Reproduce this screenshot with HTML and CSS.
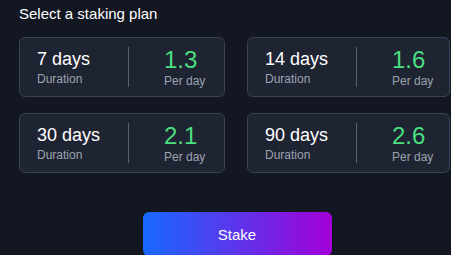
FILE: index.html
```html
<!DOCTYPE html>
<html lang="en">
<head>
    <meta charset="UTF-8">
    <meta name="viewport" content="width=device-width, initial-scale=1.0">
    <title>Staking</title>
    <link rel="stylesheet" href="styles.css">
</head>
<body>

    <div class="title">Select a staking plan</div>

    <div class="plans">
        <div class="plan">
            <div class="plan-left">
                <div class="days">7 days</div>
                <div class="label">Duration</div>
            </div>
            <div class="divider"></div>
            <div class="plan-right">
                <div class="rate">1.3</div>
                <div class="label">Per day</div>
            </div>
        </div>
        <div class="plan">
            <div class="plan-left">
                <div class="days">14 days</div>
                <div class="label">Duration</div>
            </div>
            <div class="divider"></div>
            <div class="plan-right">
                <div class="rate">1.6</div>
                <div class="label">Per day</div>
            </div>
        </div>
        <div class="plan">
            <div class="plan-left">
                <div class="days">30 days</div>
                <div class="label">Duration</div>
            </div>
            <div class="divider"></div>
            <div class="plan-right">
                <div class="rate">2.1</div>
                <div class="label">Per day</div>
            </div>
        </div>
        <div class="plan">
            <div class="plan-left">
                <div class="days">90 days</div>
                <div class="label">Duration</div>
            </div>
            <div class="divider"></div>
            <div class="plan-right">
                <div class="rate">2.6</div>
                <div class="label">Per day</div>
            </div>
        </div>
    </div>

    <button class="stake-btn">Stake</button>

</body>
</html>
```

FILE: styles.css
```css
body {
    margin: 0;
    background-color: #131722;
    font-family: 'Liberation Sans', Arial, sans-serif;
    color: #ffffff;
    overflow: hidden;
}
.title {
    font-size: 15px;
    line-height: 17px;
    padding: 5px 0 0 19px;
}
.plans {
    display: grid;
    grid-template-columns: 206px 203px;
    column-gap: 22px;
    row-gap: 16px;
    margin: 15px 0 0 19px;
}
.plan {
    display: flex;
    align-items: center;
    height: 58px;
    padding: 0 12px 0 17px;
    background-color: #1f2433;
    border: 1px solid #3a4257;
    border-radius: 6px;
}
.plan-left {
    width: 91px;
    flex-shrink: 0;
}
.days {
    font-size: 18px;
}
.label {
    font-size: 12px;
    color: #9ca3af;
}
.plan-left .label {
    margin-top: 2px;
}
.divider {
    width: 1px;
    height: 40px;
    flex-shrink: 0;
    background-color: #5b6273;
}
.plan-right {
    margin-left: 35px;
    white-space: nowrap;
}
.rate {
    font-size: 24px;
    color: #4ade80;
}
.stake-btn {
    display: block;
    width: 189px;
    height: 44px;
    margin: 39px 0 0 143px;
    padding-left: 5px;
    border: none;
    border-radius: 6px;
    background: linear-gradient(90deg, #1769ff, #a300d6);
    color: white;
    font-family: 'Liberation Sans', Arial, sans-serif;
    font-size: 15px;
    cursor: pointer;
}
```
